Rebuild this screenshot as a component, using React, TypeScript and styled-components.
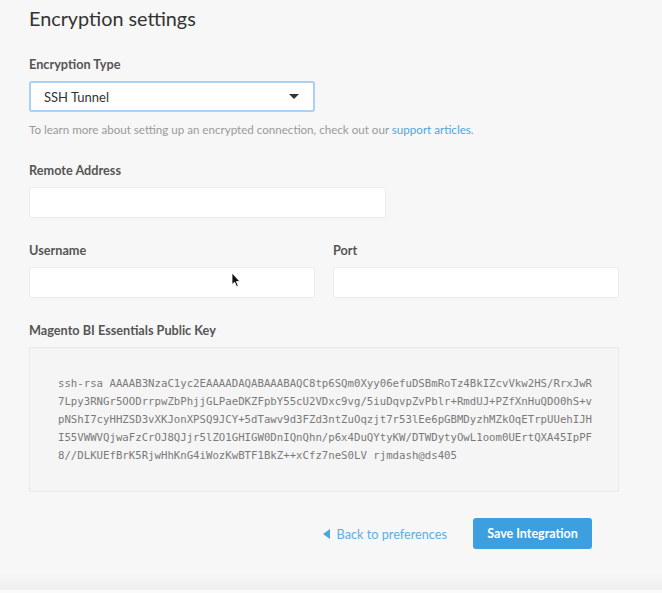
import React from "react";
import styled, { createGlobalStyle } from "styled-components";

const KEY_LINES = [
  "ssh-rsa AAAAB3NzaC1yc2EAAAADAQABAAABAQC8tp6SQm0Xyy06efuDSBmRoTz4BkIZcvVkw2HS/RrxJwR",
  "7Lpy3RNGr5OODrrpwZbPhjjGLPaeDKZFpbY55cU2VDxc9vg/5iuDqvpZvPblr+RmdUJ+PZfXnHuQDO0hS+v",
  "pNShI7cyHHZSD3vXKJonXPSQ9JCY+5dTawv9d3FZd3ntZuOqzjt7r53lEe6pGBMDyzhMZkOqETrpUUehIJH",
  "I55VWWVQjwaFzCrOJ8QJjr5lZO1GHIGW0DnIQnQhn/p6x4DuQYtyKW/DTWDytyOwL1oom0UErtQXA45IpPF",
  "8//DLKUEfBrK5RjwHhKnG4iWozKwBTF1BkZ++xCfz7neS0LV rjmdash@ds405",
];

function App() {
  return (
    <>
      <GlobalStyle />
      <Page>
        <Content>
          <Title>Encryption settings</Title>

          <Field>
            <Label>Encryption Type</Label>
            <Select>
              <span>SSH Tunnel</span>
              <Caret />
            </Select>
            <Help>
              To learn more about setting up an encrypted connection, check out our{" "}
              <HelpLink>support articles</HelpLink>.
            </Help>
          </Field>

          <Field>
            <Label>Remote Address</Label>
            <Input $width={357} />
          </Field>

          <Row>
            <Field>
              <Label>Username</Label>
              <InputWrap>
                <Input $width={286} />
                <Cursor viewBox="0 0 10 16">
                  <path
                    d="M1 1 L1 12.5 L3.6 10.2 L5.6 14.6 L7.3 13.8 L5.4 9.6 L8.8 9.4 Z"
                    fill="#111"
                    stroke="#fff"
                    strokeWidth="0.8"
                  />
                </Cursor>
              </InputWrap>
            </Field>
            <Field>
              <Label>Port</Label>
              <Input $width={286} />
            </Field>
          </Row>

          <Field>
            <Label>Magento BI Essentials Public Key</Label>
            <KeyBox>{KEY_LINES.join("\n")}</KeyBox>
          </Field>

          <Actions>
            <BackLink>
              <BackArrow />
              Back to preferences
            </BackLink>
            <SaveButton>Save Integration</SaveButton>
          </Actions>
        </Content>
        <Footer />
      </Page>
    </>
  );
}

export default App;

const GlobalStyle = createGlobalStyle`
  html, body {
    margin: 0;
    padding: 0;
    background: #f7f7f7;
  }
  body {
    font-family: Lato, "Open Sans", sans-serif;
    color: #333;
  }
`;
const Page = styled.div`
  width: 662px;
  height: 593px;
  display: flex;
  flex-direction: column;
  background: #f7f7f7;
  overflow: hidden;
`;
const Content = styled.div`
  flex: 1;
  padding: 6px 0 0 29px;
  width: 590px;
`;
const Title = styled.h1`
  margin: 0 0 26px;
  height: 24px;
  line-height: 24px;
  font-size: 19.8px;
  font-weight: 400;
  color: #333;
`;
const Field = styled.div`
  display: flex;
  flex-direction: column;
  margin-bottom: 24px;
`;
const Label = styled.label`
  height: 16px;
  line-height: 16px;
  margin-bottom: 9px;
  font-size: 12.7px;
  font-weight: 700;
  color: #555;
`;
const Select = styled.div`
  box-sizing: border-box;
  width: 286px;
  height: 31px;
  display: flex;
  align-items: center;
  justify-content: space-between;
  padding: 0 14px 0 13px;
  background: #fff;
  border: 2px solid #a9d1f5;
  border-radius: 3px;
  font-size: 13px;
  color: #333;
`;
const Caret = styled.span`
  width: 0;
  height: 0;
  border-left: 5px solid transparent;
  border-right: 5px solid transparent;
  border-top: 5px solid #333;
`;
const Help = styled.p`
  margin: 10px 0 0;
  line-height: 16px;
  font-size: 11.6px;
  color: #9a9a9a;
`;
const HelpLink = styled.a`
  color: #4ea5dd;
  cursor: pointer;
`;
const Input = styled.div<{ $width: number }>`
  box-sizing: border-box;
  width: ${(p) => p.$width}px;
  height: 31px;
  background: #fff;
  border: 1px solid #ececec;
  border-radius: 2px;
`;
const Row = styled.div`
  display: flex;
  gap: 18px;
`;
const InputWrap = styled.div`
  position: relative;
`;
const Cursor = styled.svg`
  position: absolute;
  left: 202px;
  top: 5px;
  width: 10px;
  height: 16px;
`;
const KeyBox = styled.pre`
  box-sizing: border-box;
  width: 590px;
  height: 145px;
  margin: 0;
  padding: 27px 0 0 28px;
  background: #f5f5f5;
  border: 1px solid #e9e9e9;
  border-radius: 2px;
  font-family: "DejaVu Sans Mono", "Liberation Mono", monospace;
  font-size: 10.7px;
  line-height: 18px;
  color: #7a7a7a;
  white-space: pre;
`;
const Actions = styled.div`
  display: flex;
  justify-content: flex-end;
  align-items: center;
  gap: 26px;
  padding-right: 27px;
  margin-top: 26px;
`;
const BackLink = styled.a`
  display: flex;
  align-items: center;
  gap: 7px;
  font-size: 12.7px;
  color: #5aaee3;
  cursor: pointer;
`;
const BackArrow = styled.span`
  width: 0;
  height: 0;
  border-top: 5px solid transparent;
  border-bottom: 5px solid transparent;
  border-right: 7px solid #4ea5dd;
`;
const SaveButton = styled.button`
  width: 119px;
  height: 31px;
  border: none;
  border-radius: 3px;
  background: #3d9fe0;
  color: #fff;
  font-family: Lato, "Open Sans", sans-serif;
  font-size: 12.5px;
  font-weight: 700;
  cursor: pointer;
`;
const Footer = styled.div`
  height: 16px;
  background: linear-gradient(#f7f7f7, #efefef);
  border-bottom: 3px solid #fafafa;
`;
